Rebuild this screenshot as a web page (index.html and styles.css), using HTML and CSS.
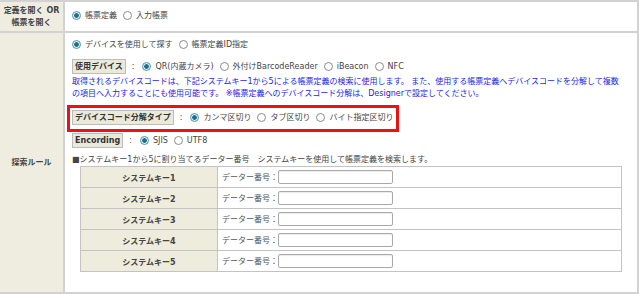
FILE: index.html
```html
<!DOCTYPE html>
<html lang="ja">
<head>
    <meta charset="UTF-8">
    <title>探索ルール設定</title>
    <link rel="stylesheet" href="styles.css">
</head>
<body>
    <div class="form">
        <div class="row row-open">
            <div class="head">定義を開く OR<br>帳票を開く</div>
            <div class="body">
                <div class="line">
                    <label class="opt"><span class="radio on"></span>帳票定義</label>
                    <label class="opt"><span class="radio"></span>入力帳票</label>
                </div>
            </div>
        </div>

        <div class="row row-rule">
            <div class="head">探索ルール</div>
            <div class="body">
                <div class="line first">
                    <label class="opt"><span class="radio on"></span>デバイスを使用して探す</label>
                    <label class="opt"><span class="radio"></span>帳票定義ID指定</label>
                </div>

                <div class="line field device">
                    <span class="tag">使用デバイス</span><span class="colon">:</span>
                    <label class="opt"><span class="radio on"></span>QR(内蔵カメラ)</label>
                    <label class="opt"><span class="radio"></span>外付けBarcodeReader</label>
                    <label class="opt"><span class="radio"></span>iBeacon</label>
                    <label class="opt"><span class="radio"></span>NFC</label>
                </div>

                <p class="note">
                    取得されるデバイスコードは、下記システムキー1から5による帳票定義の検索に使用します。 また、使用する帳票定義へデバイスコードを分解して複数<br>
                    の項目へ入力することにも使用可能です。 ※帳票定義へのデバイスコード分解は、Designerで設定してください。
                </p>

                <div class="mark">
                    <div class="line field">
                        <span class="tag">デバイスコード分解タイプ</span><span class="colon">:</span>
                        <label class="opt"><span class="radio on"></span>カンマ区切り</label>
                        <label class="opt"><span class="radio"></span>タブ区切り</label>
                        <label class="opt"><span class="radio"></span>バイト指定区切り</label>
                    </div>
                </div>

                <div class="line field encode">
                    <span class="tag">Encording</span><span class="colon">:</span>
                    <label class="opt"><span class="radio on"></span>SJIS</label>
                    <label class="opt"><span class="radio"></span>UTF8</label>
                </div>

                <p class="caption">■システムキー1から5に割り当てるデーター番号　システムキーを使用して帳票定義を検索します。</p>

                <table class="keys">
                    <tr><td class="key">システムキー1</td><td class="val">データー番号：<span class="input"></span></td></tr>
                    <tr><td class="key">システムキー2</td><td class="val">データー番号：<span class="input"></span></td></tr>
                    <tr><td class="key">システムキー3</td><td class="val">データー番号：<span class="input"></span></td></tr>
                    <tr><td class="key">システムキー4</td><td class="val">データー番号：<span class="input"></span></td></tr>
                    <tr><td class="key">システムキー5</td><td class="val">データー番号：<span class="input"></span></td></tr>
                </table>
            </div>
        </div>
    </div>
</body>
</html>
```

FILE: styles.css
```css
body {
    margin: 0;
    font-family: "DejaVu Sans", "Noto Sans CJK JP", sans-serif;
    font-size: 8px;
    color: #444;
    background: #fff;
}
.form {
    width: 637px;
    border-top: 2px solid #d2d2d2;
    border-right: 2px solid #d2d2d2;
    border-bottom: 2px solid #d2d2d2;
}
.row {
    display: flex;
}
.row-open {
    height: 29px;
    border-bottom: 2px solid #d2d2d2;
}
.row-rule {
    height: 259px;
}
.head {
    width: 63px;
    flex-shrink: 0;
    display: flex;
    align-items: center;
    justify-content: center;
    text-align: center;
    line-height: 12px;
    font-weight: bold;
    color: #444;
    background: #efeddf;
    border-right: 2px solid #d2d2d2;
}
.body {
    flex: 1;
    padding-left: 7px;
}
.row-open .body {
    display: flex;
    align-items: center;
    padding-bottom: 2px;
}
.line {
    display: flex;
    align-items: center;
    line-height: 13px;
    white-space: nowrap;
}
.line.first {
    margin-top: 5px;
}
.opt {
    display: inline-flex;
    align-items: center;
    margin-right: 6px;
}
.radio {
    width: 7px;
    height: 7px;
    margin-right: 4px;
    border: 1px solid #8c8c8c;
    border-radius: 50%;
    background: #fff;
}
.radio.on {
    border-color: #4a96b4;
    background: radial-gradient(circle, #1f6f8c 0 2px, #dceef6 2.6px);
}
.field {
    line-height: 11px;
}
.device {
    margin-top: 8px;
}
.tag {
    display: inline-block;
    padding: 1px 2px;
    font-weight: bold;
    color: #333;
    background: #ebe9d9;
    border: 1px solid #bcbcbc;
}
.colon {
    margin: 0 8px 0 6px;
}
.note {
    margin: 2px 0 0;
    line-height: 12px;
    color: #1a26e4;
    white-space: nowrap;
}
.mark {
    width: fit-content;
    margin: 5px 0 0 -5px;
    padding: 2px 3px 4px 2px;
    border: 3px solid #ee1111;
}
.mark .opt:last-child {
    margin-right: 0;
}
.encode {
    margin-top: 1px;
}
.caption {
    margin: 6px 0 0;
    line-height: 12px;
}
.keys {
    width: 542px;
    margin-left: 8px;
    border-collapse: collapse;
}
.keys td {
    height: 20px;
    padding: 0;
    border: 1px solid #c3c3c3;
}
.keys .key {
    width: 136px;
    text-align: center;
    font-weight: bold;
    color: #444;
    background: #eeecdd;
}
.keys .val {
    padding-left: 4px;
    color: #555;
}
.input {
    display: inline-block;
    width: 113px;
    height: 12px;
    vertical-align: middle;
    border: 1px solid #a9a9a9;
    border-radius: 2px;
    background: #fff;
    box-shadow: inset 0 1px 1px rgba(0, 0, 0, 0.08);
}
```
